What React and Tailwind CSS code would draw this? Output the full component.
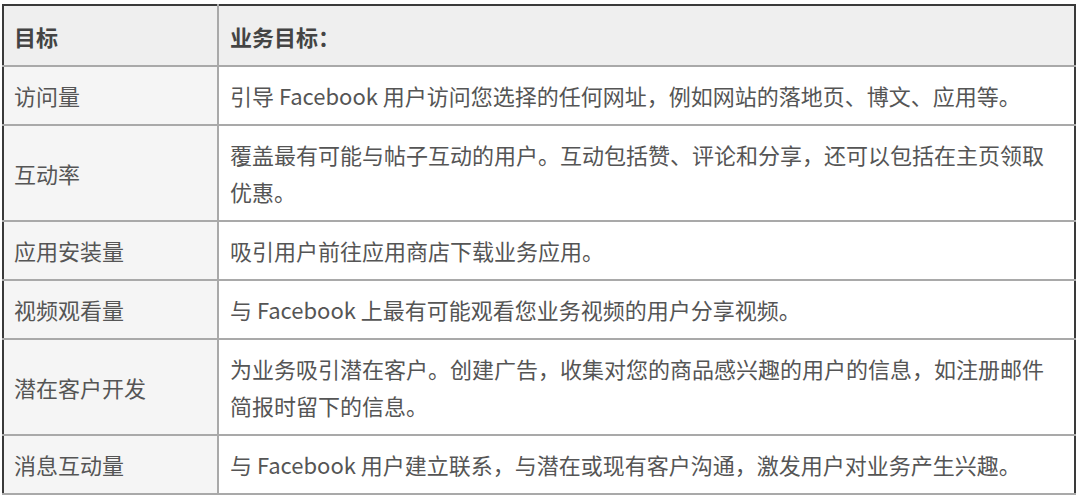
const rows = [
  ["访问量", ["引导 Facebook 用户访问您选择的任何网址，例如网站的落地页、博文、应用等。"]],
  ["互动率", ["覆盖最有可能与帖子互动的用户。互动包括赞、评论和分享，还可以包括在主页领取", "优惠。"]],
  ["应用安装量", ["吸引用户前往应用商店下载业务应用。"]],
  ["视频观看量", ["与 Facebook 上最有可能观看您业务视频的用户分享视频。"]],
  ["潜在客户开发", ["为业务吸引潜在客户。创建广告，收集对您的商品感兴趣的用户的信息，如注册邮件", "简报时留下的信息。"]],
  ["消息互动量", ["与 Facebook 用户建立联系，与潜在或现有客户沟通，激发用户对业务产生兴趣。"]],
];

export default function App() {
  return (
    <div className="w-[1080px] h-[495px] bg-white pt-[4px] pl-[2px]">
      <table
        className="w-[1074px] border-collapse border-2 border-[#3a3a3a] text-[22px] leading-[37px] text-[#555]"
        style={{ fontFamily: '"Noto Sans CJK SC", "Noto Sans", sans-serif' }}
      >
        <tbody>
          <tr className="bg-[#efefef] h-[61px]">
            <td className="w-[215px] border-r-2 border-b-2 border-[#a9a9a9] pl-[10px] pt-[2px] font-bold text-[#444]">目标</td>
            <td className="border-b-2 border-[#a9a9a9] pl-[11px] pt-[2px] font-bold text-[#444]">业务目标：</td>
          </tr>
          {rows.map(([a, lines], i) => (
            <tr key={i}>
              <td className="bg-[#f5f5f5] border-r-2 border-b-2 border-[#a9a9a9] pl-[10px] py-[10px] align-middle">{a}</td>
              <td className="bg-white border-b-2 border-[#a9a9a9] pl-[11px] pr-[4px] py-[10px] align-middle whitespace-nowrap">
                {lines.map((l, j) => (
                  <div key={j}>{l}</div>
                ))}
              </td>
            </tr>
          ))}
        </tbody>
      </table>
    </div>
  );
}
